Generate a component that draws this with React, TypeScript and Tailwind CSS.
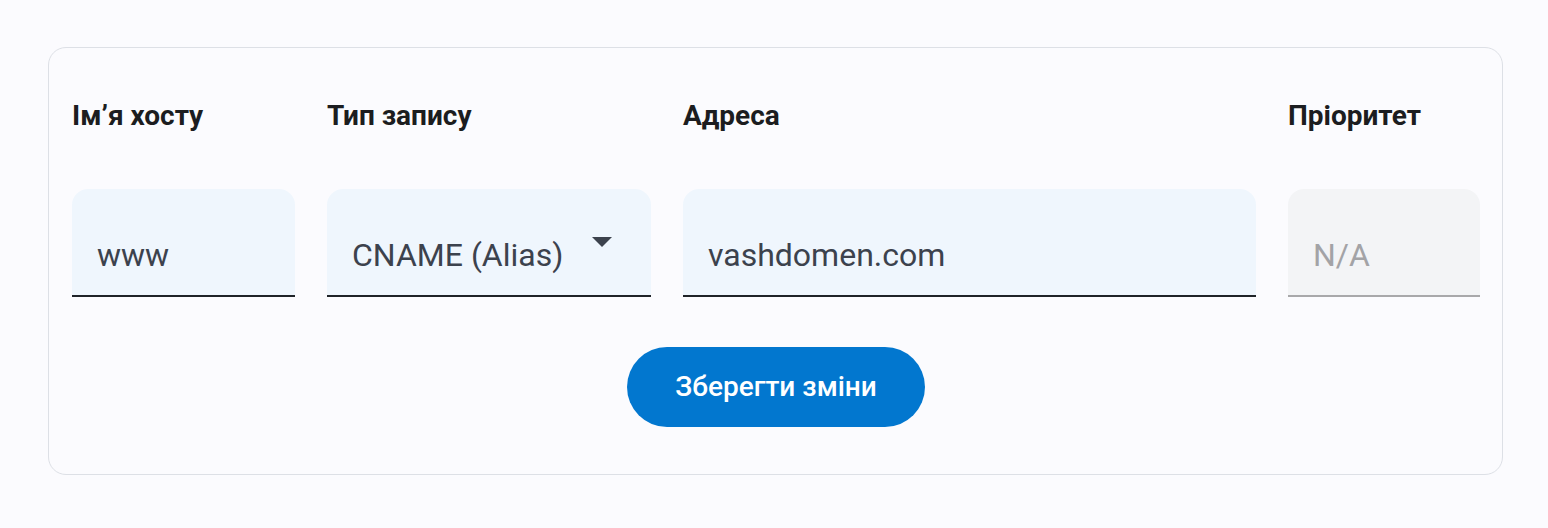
import React from 'react';

const fieldBase =
  'h-[108px] rounded-t-2xl border-b-2 flex items-end pb-[20px] pl-[25px] text-[32px] leading-[40px]';

function DnsField({ label, width, children }: { label: string; width: string; children: React.ReactNode }) {
  return (
    <div className={`flex shrink-0 flex-col ${width}`}>
      <div className="text-[28px] leading-[32px] font-bold text-[#1c1d20]">{label}</div>
      <div className="mt-[57px]">{children}</div>
    </div>
  );
}

export default function App() {
  return (
    <div
      className="min-h-screen bg-[#fbfbfe] pl-12 pt-[47px]"
      style={{ fontFamily: 'Roboto, "Noto Sans", Arial, sans-serif' }}
    >
      <div className="w-[1455px] rounded-[18px] border border-[#dde0e6] bg-[#fbfbfe] pl-[23px] pr-[22px] pt-[52px] pb-[47px]">
        {/* рядок полів */}
        <div className="flex gap-8">
          <DnsField label="Ім’я хосту" width="w-[223px]">
            <div className={`${fieldBase} bg-[#eff6fd] border-[#1f2328] text-[#3c424d]`}>www</div>
          </DnsField>

          <DnsField label="Тип запису" width="w-[324px]">
            <div className={`${fieldBase} relative bg-[#eff6fd] border-[#1f2328] text-[#3c424d]`}>
              CNAME (Alias)
              <svg
                className="absolute right-[39px] top-[48px]"
                width="20"
                height="10"
                viewBox="0 0 20 10"
              >
                <path d="M0 0 L20 0 L10 10 Z" fill="#3c424d" />
              </svg>
            </div>
          </DnsField>

          <DnsField label="Адреса" width="w-[573px]">
            <div className={`${fieldBase} bg-[#eff6fd] border-[#1f2328] text-[#3c424d]`}>vashdomen.com</div>
          </DnsField>

          <DnsField label="Пріоритет" width="w-[192px]">
            <div className={`${fieldBase} bg-[#f3f4f6] border-[#a8a8aa] text-[#a3a3a6]`}>N/A</div>
          </DnsField>
        </div>

        <div className="mt-[50px] flex justify-center">
          <button className="h-20 w-[298px] rounded-full bg-[#0277cf] text-[28px] font-medium text-white">
            Зберегти зміни
          </button>
        </div>
      </div>
    </div>
  );
}
